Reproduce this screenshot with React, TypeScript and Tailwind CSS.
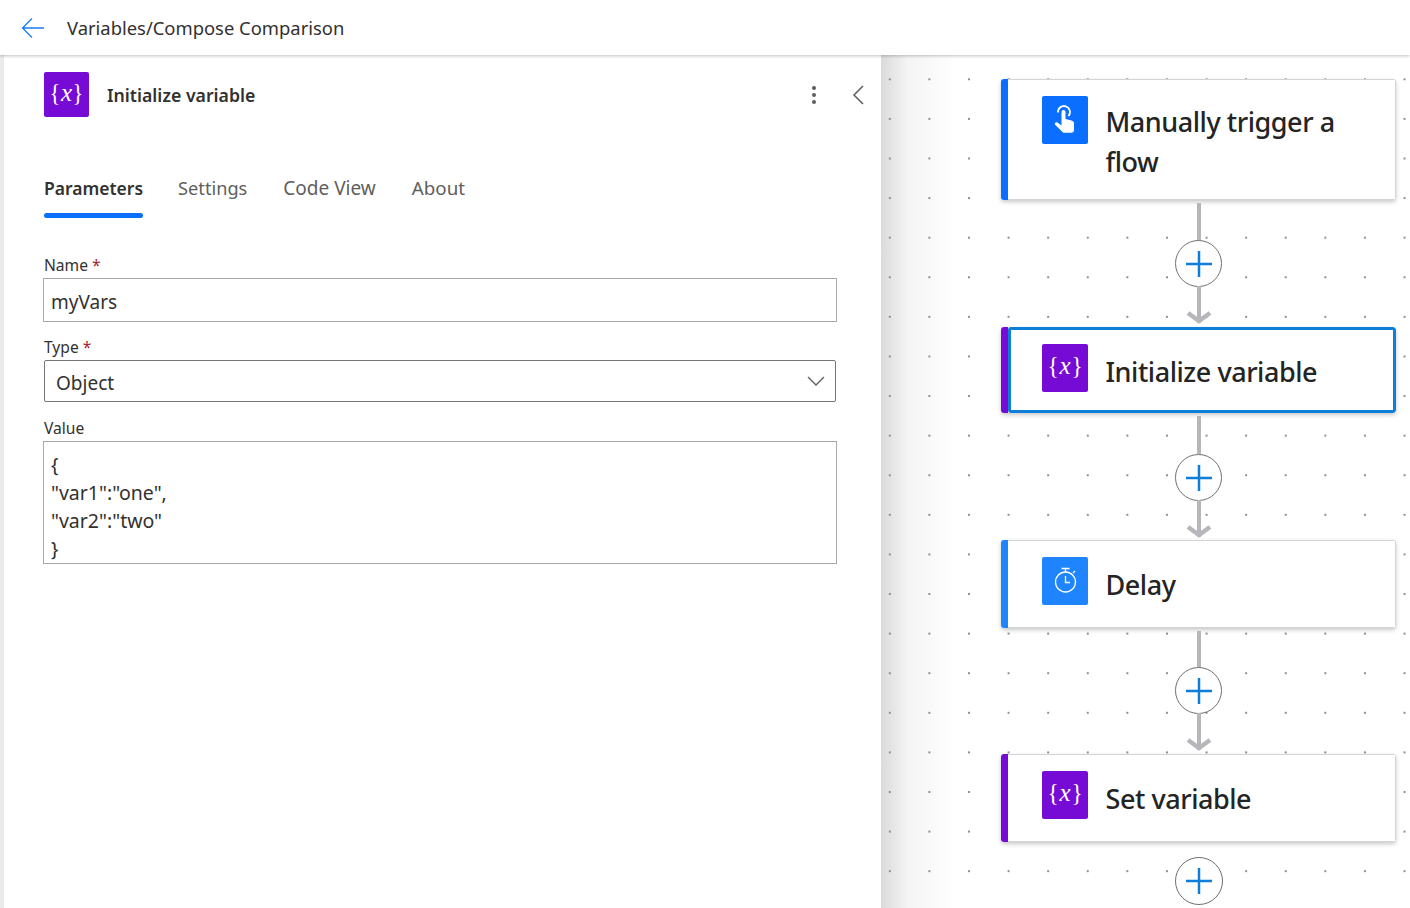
import { type ReactNode } from 'react'

const uiFont = "font-['Noto_Sans',sans-serif]"

function VariableIcon({ size }: { size: 'sm' | 'lg' }) {
  return (
    <div
      className={
        size === 'sm'
          ? "flex h-[45px] w-[45px] shrink-0 items-center justify-center rounded-[2px] bg-[#770bd6] font-['Liberation_Serif',serif] text-[25px] leading-none text-white"
          : "flex h-[48px] w-[46px] shrink-0 items-center justify-center rounded-[2px] bg-[#770bd6] font-['Liberation_Serif',serif] text-[26px] leading-none text-white"
      }
    >
      <span className="-mt-[5px] scale-x-90">{'{'}</span>
      <span className="-mt-[5px] text-[25px] italic">x</span>
      <span className="-mt-[5px] scale-x-90">{'}'}</span>
    </div>
  )
}

function TouchIcon() {
  return (
    <div className="flex h-[48px] w-[46px] shrink-0 items-center justify-center rounded-[2px] bg-[#0a6eff]">
      <svg width="24" height="34" viewBox="0 0 24 34" fill="none">
        <path d="M5 9.500a6 6 0 1 1 10.500 3.500" stroke="#fff" strokeWidth="1.800" />
        <path
          d="M8.500 9a2 2 0 0 1 4 0v7l6 1.600c1.600.4 2.500 1.400 2.500 3V27c0 1.700-1 2.800-2.700 2.800h-6.500c-1.300 0-2.200-.5-3-1.500L2.300 22c-.8-1-.5-2 .3-2.500s1.800-.3 2.600.4l3.300 2.600z"
          fill="#fff"
        />
      </svg>
    </div>
  )
}

function TimerIcon() {
  return (
    <div className="flex h-[48px] w-[46px] shrink-0 items-center justify-center rounded-[2px] bg-[#1f85ff]">
      <svg width="24" height="26" viewBox="0 0 24 26" fill="none" stroke="#fff" strokeWidth="1.300" className="ml-[2px] -mt-[3px]">
        <circle cx="11.500" cy="15" r="10" />
        <path d="M7.500 1.500h8M11.500 1.500V5M19 6l2-2M11.500 9v6.500H16" />
      </svg>
    </div>
  )
}

function Card({
  icon,
  title,
  accent,
  selected,
  className,
  titleClass,
}: {
  icon: ReactNode
  title: ReactNode
  accent: string
  selected?: boolean
  className: string
  titleClass: string
}) {
  return (
    <div className={`flex w-[395px] shrink-0 overflow-hidden rounded-[3px] shadow-[0_2px_4px_rgba(0,0,0,0.22)] ${className}`}>
      <div className={`w-[7px] shrink-0 ${accent}`} />
      <div
        className={
          selected
            ? 'flex flex-1 items-start gap-[17.500px] rounded-[3px] border-[3px] border-[#0f7ed8] bg-white pl-[31px] pt-[14px]'
            : 'flex flex-1 items-start gap-[17.500px] border-y border-r border-[#d4d4d4] bg-white pl-[34px] pt-[16px]'
        }
      >
        {icon}
        <div className={`text-[27px] font-medium leading-[40px] tracking-[-0.45px] text-[#242424] ${titleClass}`}>{title}</div>
      </div>
    </div>
  )
}

function AddButton({ large }: { large?: boolean }) {
  return (
    <div
      className={
        large
          ? 'flex h-[48px] w-[48px] shrink-0 items-center justify-center rounded-full border-[1.5px] border-[#707070] bg-white'
          : 'flex h-[47px] w-[47px] shrink-0 items-center justify-center rounded-full border-[1.5px] border-[#707070] bg-white'
      }
    >
      <svg width="28" height="28" viewBox="0 0 28 28" stroke="#0f7ed8" strokeWidth="2.500">
        <path d="M14 1v26M1 14h26" />
      </svg>
    </div>
  )
}

function Connector({ first, height }: { first: number; height: number }) {
  return (
    <div className="flex w-[395px] shrink-0 flex-col items-center pt-[3px]" style={{ height }}>
      <div className="w-[4px] shrink-0 bg-[#b6b6bb]" style={{ height: first }} />
      <AddButton />
      <div className="-mt-px h-[37px] w-[4px] shrink-0 bg-[#b6b6bb]" />
      <svg width="26" height="14" viewBox="0 0 26 14" className="-mt-[13px] shrink-0" fill="none" stroke="#b6b6bb" strokeWidth="4.500">
        <path d="M2 3l11 8 11-8" />
      </svg>
    </div>
  )
}

function Field({ label, required, children, className }: { label: string; required?: boolean; children: ReactNode; className?: string }) {
  return (
    <div className={className}>
      <div className="h-[21px] text-[15.6px] leading-[17px] text-[#323130]">
        {label}
        {required && <span className="ml-1 text-[#a4262c]">*</span>}
      </div>
      {children}
    </div>
  )
}

export default function App() {
  return (
    <div className={`flex h-[908px] w-[1410px] flex-col overflow-hidden bg-white ${uiFont}`}>
      <header className="relative z-20 flex h-[55px] shrink-0 items-center bg-white pl-[21px] shadow-[0_1px_3px_rgba(0,0,0,0.25)]">
        <svg width="23" height="22" viewBox="0 0 23 22" fill="none" stroke="#1a7ef0" strokeWidth="1.300">
          <path d="M23 11H2M11 1.500L1.500 11l9.500 9.500" />
        </svg>
        <span className="ml-[23px] text-[18.4px] text-[#323130]">Variables/Compose Comparison</span>
      </header>

      <main className="flex min-h-0 flex-1">
        <div className="w-[4px] shrink-0 bg-[#ebebeb]" />

        <section className="relative z-10 w-[877px] shrink-0 bg-white pl-[40px]">
          <div className="flex items-center pt-[17px]">
            <VariableIcon size="sm" />
            <h1 className="ml-[18px] pt-[1px] text-[17.7px] font-semibold text-[#323130]">Initialize variable</h1>
            <div className="ml-auto flex items-center pr-[17px]">
              <div className="flex flex-col gap-[3px]">
                <span className="h-[4px] w-[4px] rounded-full bg-[#605e5c]" />
                <span className="h-[4px] w-[4px] rounded-full bg-[#605e5c]" />
                <span className="h-[4px] w-[4px] rounded-full bg-[#605e5c]" />
              </div>
              <svg width="12" height="20" viewBox="0 0 12 20" fill="none" stroke="#605e5c" strokeWidth="1.500" className="ml-[36px]">
                <path d="M11 1L2 10l9 9" />
              </svg>
            </div>
          </div>

          <nav className="mt-[56px] flex gap-[36px] text-[18.2px] leading-[30px] text-[#605e5c]">
            <div className="flex flex-col font-semibold text-[#323130]">
              <span className="text-[17.500px]">Parameters</span>
              <span className="mt-[10px] h-[5px] rounded-full bg-[#0a6eff]" />
            </div>
            <div className="-ml-[1px]">Settings</div>
            <div className="text-[19px]">Code View</div>
            <div className="text-[18.8px]">About</div>
          </nav>

          <div className="mt-[39px] flex w-[793px] flex-col gap-[17px]">
            <Field label="Name" required>
              <div className="-ml-px flex h-[44px] w-[794px] items-center border border-[#a9a9a9] pl-[7px] pt-[5px] text-[19px] text-[#323130]">myVars</div>
            </Field>
            <Field label="Type" required>
              <div className="flex h-[42px] w-[792px] items-center justify-between rounded-[2px] border border-[#757575] pl-[11px] pr-[10px] text-[19px] text-[#323130]">
                <span className="pt-[5px]">Object</span>
                <svg width="18" height="10" viewBox="0 0 18 10" fill="none" stroke="#605e5c" strokeWidth="1.300">
                  <path d="M1 1l8 8 8-8" />
                </svg>
              </div>
            </Field>
            <Field label="Value" className="mt-[1px]">
              <div className="-ml-px h-[123px] w-[794px] border border-[#a9a9a9] pl-[7px] pt-[9px] text-[19.500px] leading-[28px] text-[#323130]">
                <div>{'{'}</div>
                <div>"var1":"one",</div>
                <div>"var2":"two"</div>
                <div>{'}'}</div>
              </div>
            </Field>
          </div>
        </section>

        <section className="relative flex-1 pl-[120px] pt-[24px]">
          <div className="pointer-events-none absolute inset-y-0 left-0 w-[75px] bg-gradient-to-r from-[#d6d6d6] via-[#f3f3f3] via-35% to-transparent opacity-90" />
          <div className="pointer-events-none absolute inset-0 bg-[radial-gradient(circle,#8f8f8f_1.2px,transparent_1.5px)] bg-[length:39.6px_39.6px] bg-[position:-11px_4.500px]" />
          <div className="relative flex flex-col">
            <Card
              className="h-[121px]"
              accent="bg-[#0a6eff]"
              icon={<TouchIcon />}
              titleClass="mt-[6px]"
              title={
                <>
                  Manually trigger a
                  <br />
                  flow
                </>
              }
            />
            <Connector first={37} height={127} />
            <Card className="h-[86px]" accent="bg-[#770bd6]" selected icon={<VariableIcon size="lg" />} titleClass="mt-[8px]" title="Initialize variable" />
            <Connector first={38} height={127} />
            <Card className="h-[88px]" accent="bg-[#1f85ff]" icon={<TimerIcon />} titleClass="mt-[8px]" title="Delay" />
            <Connector first={36} height={126} />
            <Card className="h-[88px]" accent="bg-[#770bd6]" icon={<VariableIcon size="lg" />} titleClass="mt-[8px]" title="Set variable" />
            <div className="flex w-[395px] justify-center pt-[15px]">
              <AddButton large />
            </div>
          </div>
        </section>
      </main>
    </div>
  )
}
